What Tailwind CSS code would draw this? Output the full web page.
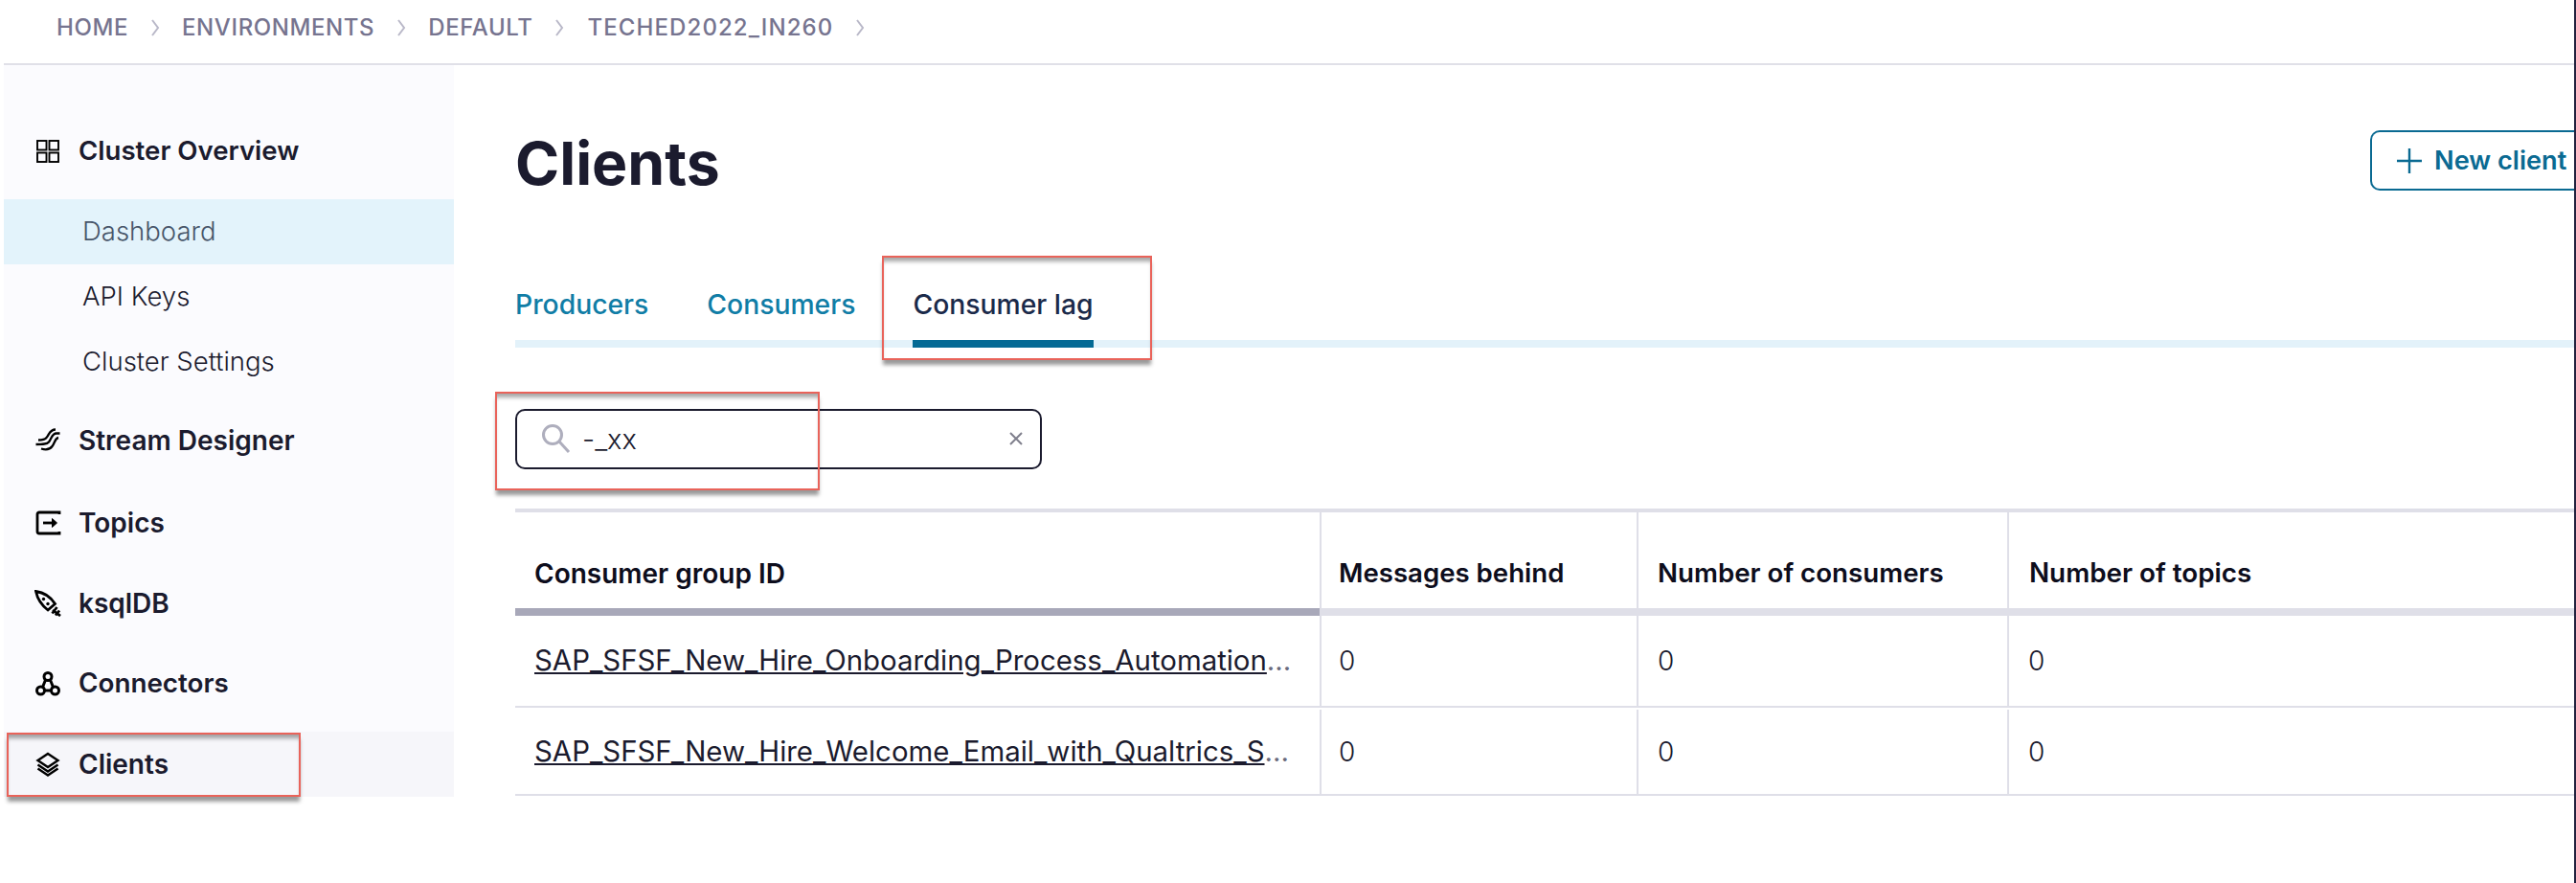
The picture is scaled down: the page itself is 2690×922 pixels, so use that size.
<!DOCTYPE html>
<html lang="en">
<head>
<meta charset="utf-8"/>
<title>Clients</title>
<script src="https://cdn.jsdelivr.net/npm/@tailwindcss/browser@4"></script>
</head>
<body class="bg-white">
<div class="relative w-[2690px] h-[922px] overflow-hidden border-r-2 border-[#23233f] bg-white font-['Inter',sans-serif] text-[#1b1b2e]">

  <!-- breadcrumb -->
  <nav class="h-[68px] ml-[4px] border-b-2 border-[#e0e0e8] pl-[55px] pb-[9px] flex items-center gap-[23px] text-[24px] font-medium tracking-[0.6px] text-[#76748f]">
    <span>HOME</span>
    <svg class="w-[10px] h-[20px] text-[#b9b8c8]" viewBox="0 0 10 20" fill="none" stroke="currentColor" stroke-width="2"><path d="M2 2l6 8-6 8"/></svg>
    <span>ENVIRONMENTS</span>
    <svg class="w-[10px] h-[20px] text-[#b9b8c8]" viewBox="0 0 10 20" fill="none" stroke="currentColor" stroke-width="2"><path d="M2 2l6 8-6 8"/></svg>
    <span>DEFAULT</span>
    <svg class="w-[10px] h-[20px] text-[#b9b8c8]" viewBox="0 0 10 20" fill="none" stroke="currentColor" stroke-width="2"><path d="M2 2l6 8-6 8"/></svg>
    <span class="ml-[1px] tracking-[1.1px]">TECHED2022_IN260</span>
    <svg class="w-[10px] h-[20px] text-[#b9b8c8]" viewBox="0 0 10 20" fill="none" stroke="currentColor" stroke-width="2"><path d="M2 2l6 8-6 8"/></svg>
  </nav>

  <div class="flex">
    <!-- sidebar -->
    <aside class="ml-[4px] w-[470px] h-[764px] shrink-0 bg-[#fbfbfe] pt-[56px] text-[28px] font-semibold">
      <div class="h-[68px] flex items-center pl-[32px] gap-[18px]">
        <svg class="w-7 h-7" viewBox="0 0 28 28" fill="none" stroke="#000" stroke-width="1.900"><rect x="3" y="3" width="9.500" height="9.500"/><rect x="15.500" y="3" width="9.500" height="9.500"/><rect x="3" y="15.500" width="9.500" height="9.500"/><rect x="15.500" y="15.500" width="9.500" height="9.500"/></svg>
        <span class="text-[27.6px]">Cluster Overview</span>
      </div>
      <div class="mt-[16px] font-[350] text-[27.500px]">
        <div class="h-[68px] flex items-center pl-[82px] bg-[#e3f3fb] text-[#48566a]">Dashboard</div>
        <div class="h-[68px] flex items-center pl-[82px]">API Keys</div>
        <div class="h-[68px] flex items-center pl-[82px]">Cluster Settings</div>
      </div>
      <div class="mt-[14px] h-[68px] flex items-center pl-[32px] gap-[18px]">
        <svg class="w-7 h-7" viewBox="0 0 28 28" fill="none" stroke="#000" stroke-width="2.300"><path d="M22 2.500C15.500 2.500 15.500 8 12.500 11C11 13 8 13.500 4 13.500"/><path d="M26.500 6.500H23C18 6.500 18 12 15 15.500C13 18 9 18 1.500 18"/><path d="M25 11C21.500 11.500 21.500 16 18.500 20C16 23.500 12 24 7 22.500"/></svg>
        <span>Stream Designer</span>
      </div>
      <div class="mt-[18px] h-[68px] flex items-center pl-[32px] gap-[18px]">
        <svg class="w-7 h-7" viewBox="0 0 28 28" fill="none" stroke="#000" stroke-width="2.800"><path d="M26 5V3H5a2 2 0 0 0-2 2v18a2 2 0 0 0 2 2h21v-2"/><path d="M9 14h13"/><path d="M18.500 9.500L23.500 14l-5 4.500z" fill="#000" stroke-width="1"/></svg>
        <span>Topics</span>
      </div>
      <div class="mt-[16px] h-[68px] flex items-center pl-[32px] gap-[18px]">
        <svg class="w-7 h-7" viewBox="0 0 28 28" fill="none" stroke="#000" stroke-width="2.800"><path d="M1.500 1.500C9 2.500 16 6 21.500 14.500l-7.500 6.500C7 15.500 3 9 1.500 1.500z"/><circle cx="9.500" cy="9.500" r="1.700" fill="#000" stroke="none"/><circle cx="14" cy="14.500" r="1.700" fill="#000" stroke="none"/><path d="M19 21l8 6M23.500 18l-5 6.500M26 21.500l-4 5"/></svg>
        <span>ksqlDB</span>
      </div>
      <div class="mt-[16px] h-[68px] flex items-center pl-[32px] gap-[18px]">
        <svg class="w-7 h-7" viewBox="0 0 28 28" fill="none" stroke="#000" stroke-width="3"><circle cx="14" cy="6.500" r="4"/><circle cx="6.500" cy="21" r="4"/><circle cx="21.500" cy="21" r="4"/><path d="M11.500 10L8.500 17.500M16.500 10l3 7.500M10.500 21h7"/></svg>
        <span class="text-[27.800px]">Connectors</span>
      </div>
      <div class="mt-[16px] h-[68px] flex items-center pl-[32px] gap-[18px] bg-[#f6f6fa]">
        <svg class="w-7 h-7" viewBox="0 0 28 28" fill="none" stroke="#000" stroke-width="2.400"><path d="M14 3l10.500 7L14 17 3.500 10z"/><path d="M3.500 14.500l10.500 7 10.500-7"/><path d="M3.500 18.500l10.500 7 10.500-7"/></svg>
        <span>Clients</span>
      </div>
    </aside>

    <!-- main -->
    <main class="flex-1 pl-[64px]">
      <div class="h-[132px] pt-[68px] flex items-start justify-between">
        <h1 class="text-[62.500px] leading-[68px] font-bold">Clients</h1>
        <button class="w-[213px] h-[63px] rounded-l-[10px] border-2 border-r-0 border-[#0a6a92] text-[#0a6a92] flex items-center pl-[26px] gap-[13px] text-[27.200px] font-semibold whitespace-nowrap">
          <svg class="w-[26px] h-[26px] shrink-0" viewBox="0 0 26 26" fill="none" stroke="currentColor" stroke-width="2.400"><path d="M13 0v26M0 13h26"/></svg>
          <span class="pt-[2px]">New client</span>
        </button>
      </div>

      <!-- tabs -->
      <div class="mt-[77px] h-[86px] flex items-start border-b-8 border-[#e3f2fa] text-[28.300px] font-medium">
        <a class="h-[86px] pt-[20px] text-[#107da6]">Producers</a>
        <a class="h-[86px] pt-[20px] ml-[61px] text-[#107da6]">Consumers</a>
        <a class="h-[86px] pt-[20px] ml-[60px] border-b-8 border-[#046a94] text-[#1b2a4a]">Consumer lag</a>
      </div>

      <!-- search -->
      <div class="mt-[64px] w-[550px] h-[63px] rounded-[10px] border-2 border-[#1b1b2e] flex items-center pl-[25px] pr-[18px]">
        <svg class="w-[31px] h-[31px] shrink-0 -mt-[2px]" viewBox="0 0 31 31" fill="none" stroke="#aeaebd" stroke-width="3"><circle cx="12" cy="12" r="9.500"/><path d="M19 19l10 11"/></svg>
        <span class="ml-[12px] text-[29px] font-[350] flex-1">-_xx</span>
        <svg class="w-[14px] h-[14px] -mt-[2px]" viewBox="0 0 14 14" fill="none" stroke="#7f7f8c" stroke-width="2"><path d="M1 1l12 12M13 1L1 13"/></svg>
      </div>

      <!-- table -->
      <div class="mt-[41px] border-t-4 border-[#dfdfe8] text-[28px]">
        <div class="grid grid-cols-[842px_331px_387px_1fr] bg-[linear-gradient(#fff_100px,#dfdfe8_100px)] font-semibold text-[#0d0d1c]">
          <div><div class="h-[100px] flex items-center pl-[20px] pt-[28px] border-r-2 border-[#dfdfe8]">Consumer group ID</div><div class="h-[8px] mr-[2px] bg-[#a8a8b9]"></div></div>
          <div><div class="h-[100px] flex items-center pl-[18px] pt-[28px] text-[27.600px] border-r-2 border-[#dfdfe8]">Messages behind</div><div class="h-[8px] bg-[#dfdfe8]"></div></div>
          <div><div class="h-[100px] flex items-center pl-[20px] pt-[28px] text-[27.700px] border-r-2 border-[#dfdfe8]">Number of consumers</div><div class="h-[8px] bg-[#dfdfe8]"></div></div>
          <div><div class="h-[100px] flex items-center pl-[21px] pt-[28px] text-[27.800px]">Number of topics</div><div class="h-[8px] bg-[#dfdfe8]"></div></div>
        </div>
        <div class="h-[96px] grid grid-cols-[842px_331px_387px_1fr] border-b-2 border-[#dfdfe8]">
          <div class="flex items-center pl-[20px] border-r-2 border-[#dfdfe8] whitespace-nowrap text-[29.400px]"><a class="underline">SAP_SFSF_New_Hire_Onboarding_Process_Automation</a><span class="text-[#6a6a7c]">...</span></div>
          <div class="flex items-center pl-[18px] font-[350] border-r-2 border-[#dfdfe8]">0</div>
          <div class="flex items-center pl-[20px] font-[350] border-r-2 border-[#dfdfe8]">0</div>
          <div class="flex items-center pl-[20px] font-[350]">0</div>
        </div>
        <div class="h-[92px] pt-[2px] grid grid-cols-[842px_331px_387px_1fr] border-b-2 border-[#dfdfe8]">
          <div class="flex items-center pl-[20px] border-r-2 border-[#dfdfe8] whitespace-nowrap text-[29.400px]"><a class="underline">SAP_SFSF_New_Hire_Welcome_Email_with_Qualtrics_S</a><span class="text-[#6a6a7c]">...</span></div>
          <div class="flex items-center pl-[18px] font-[350] border-r-2 border-[#dfdfe8]">0</div>
          <div class="flex items-center pl-[20px] font-[350] border-r-2 border-[#dfdfe8]">0</div>
          <div class="flex items-center pl-[20px] font-[350]">0</div>
        </div>
      </div>
    </main>
  </div>

  <!-- red annotation boxes drawn over the page -->
  <div class="absolute left-[7px] top-[765px] w-[307px] h-[67px] border-2 border-[#e9635a] shadow-[0_6px_4px_-1px_rgba(0,0,0,0.4),inset_0_6px_4px_-2px_rgba(0,0,0,0.35)]"></div>
  <div class="absolute left-[921px] top-[267px] w-[282px] h-[109px] border-2 border-[#e9635a] shadow-[0_6px_4px_-1px_rgba(0,0,0,0.4),inset_0_6px_4px_-2px_rgba(0,0,0,0.35)]"></div>
  <div class="absolute left-[517px] top-[409px] w-[339px] h-[103px] border-2 border-[#e9635a] shadow-[0_6px_4px_-1px_rgba(0,0,0,0.4),inset_0_6px_4px_-2px_rgba(0,0,0,0.35)]"></div>
</div>
</body>
</html>
